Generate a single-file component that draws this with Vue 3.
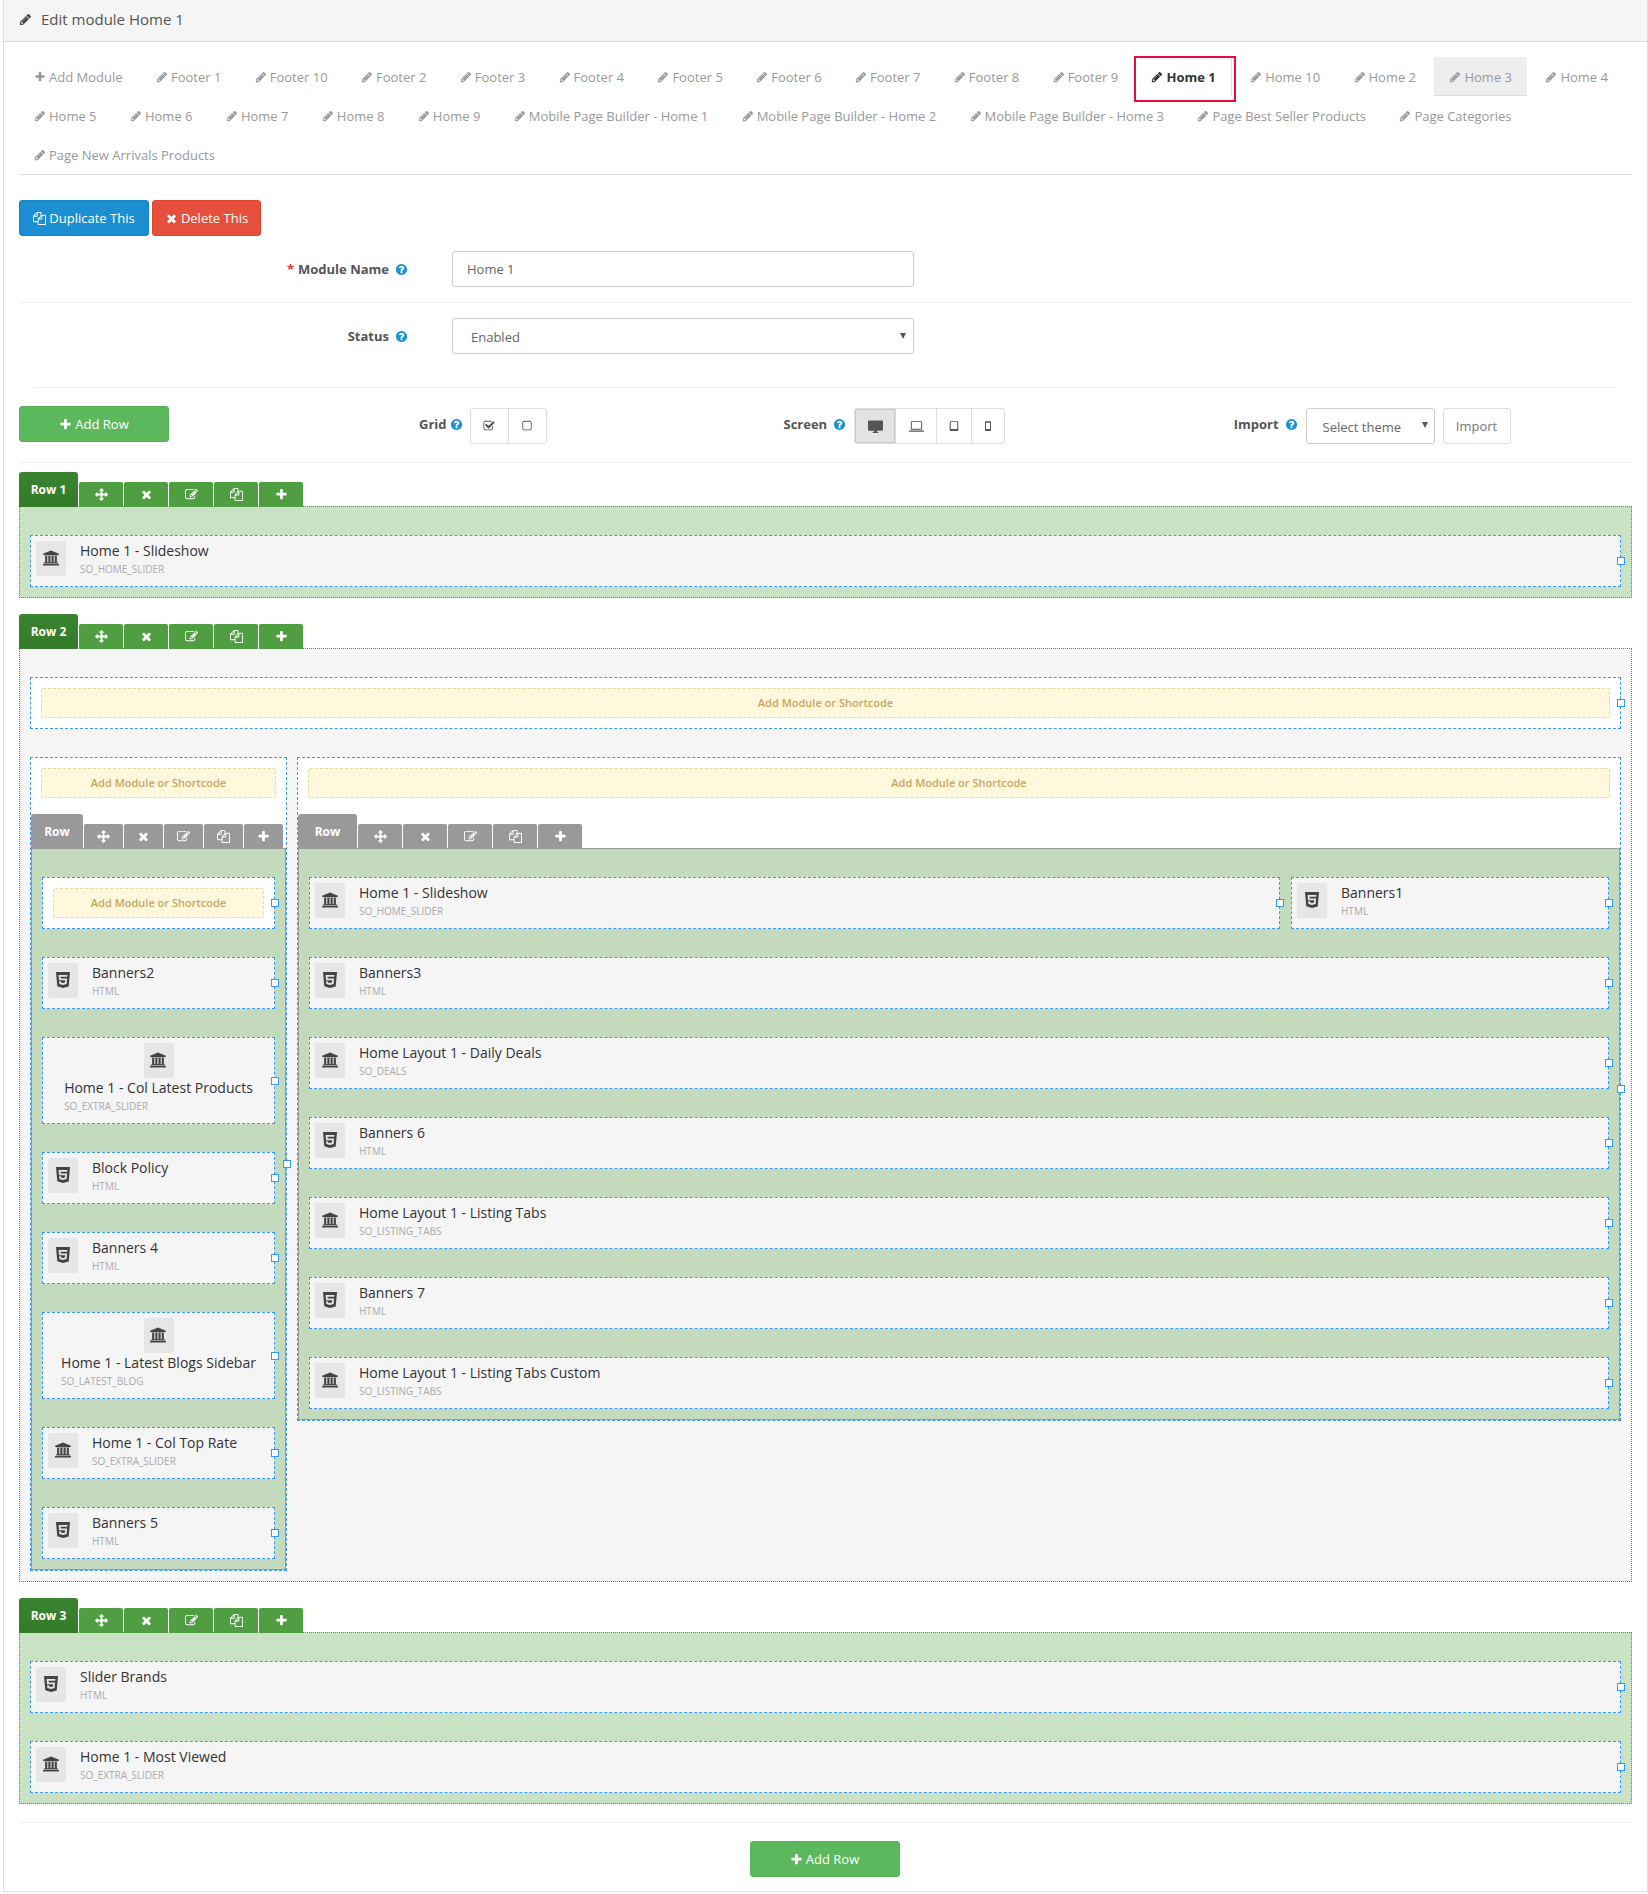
<script setup>
import { h } from 'vue'

const ICONS = {
  pencil: ['0 0 1792 1792', 'M491 1536l91-91-235-235-91 91v107h128v128h107zm523-928q0-22-22-22-10 0-17 7l-542 542q-7 7-7 17 0 22 22 22 10 0 17-7l542-542q7-7 7-17zm-54-192l416 416-832 832h-416v-416zm683 96q0 53-37 90l-166 166-416-416 166-165q36-38 90-38 53 0 91 38l235 234q37 39 37 91z'],
  plus: ['0 0 1792 1792', 'M1600 736v192q0 40-28 68t-68 28h-416v416q0 40-28 68t-68 28h-192q-40 0-68-28t-28-68v-416h-416q-40 0-68-28t-28-68v-192q0-40 28-68t68-28h416v-416q0-40 28-68t68-28h192q40 0 68 28t28 68v416h416q40 0 68 28t28 68z'],
  times: ['0 0 1792 1792', 'M1490 1322q0 40-28 68l-136 136q-28 28-68 28t-68-28l-294-294-294 294q-28 28-68 28t-68-28l-136-136q-28-28-28-68t28-68l294-294-294-294q-28-28-28-68t28-68l136-136q28-28 68-28t68 28l294 294 294-294q28-28 68-28t68 28l136 136q28 28 28 68t-28 68l-294 294 294 294q28 28 28 68z'],
  arrows: ['0 0 1792 1792', 'M1792 896q0 26-19 45l-256 256q-19 19-45 19t-45-19-19-45v-128h-384v384h128q26 0 45 19t19 45-19 45l-256 256q-19 19-45 19t-45-19l-256-256q-19-19-19-45t19-45 45-19h128v-384h-384v128q0 26-19 45t-45 19-45-19l-256-256q-19-19-19-45t19-45l256-256q19-19 45-19t45 19 19 45v128h384v-384h-128q-26 0-45-19t-19-45 19-45l256-256q19-19 45-19t45 19l256 256q19 19 19 45t-19 45-45 19h-128v384h384v-128q0-26 19-45t45-19 45 19l256 256q19 19 19 45z'],
  edit: ['0 0 1792 1792', 'M888 1184l116-116-152-152-116 116v56h96v96h56zm440-720q-16-16-33 1l-350 350q-17 17-1 33t33-1l350-350q17-17 1-33zm80 594v190q0 119-84.5 203.5t-203.5 84.5h-832q-119 0-203.5-84.5t-84.5-203.5v-832q0-119 84.5-203.5t203.5-84.5h832q63 0 117 25 15 7 18 23 3 17-9 29l-49 49q-14 14-32 8-23-6-45-6h-832q-66 0-113 47t-47 113v832q0 66 47 113t113 47h832q66 0 113-47t47-113v-126q0-13 9-22l64-64q15-15 35-7t20 29zm-96-738l288 288-672 672h-288v-288zm444 132l-92 92-288-288 92-92q28-28 68-28t68 28l152 152q28 28 28 68t-28 68z'],
  files: ['0 0 1792 1792', 'M1696 384q40 0 68 28t28 68v1216q0 40-28 68t-68 28h-960q-40 0-68-28t-28-68v-288h-544q-40 0-68-28t-28-68v-672q0-40 20-88t48-76l408-408q28-28 76-48t88-20h416q40 0 68 28t28 68v328q68-40 128-40h416zm-544 213l-299 299h299v-299zm-640-384l-299 299h299v-299zm196 647l316-316v-416h-384v416q0 40-28 68t-68 28h-416v640h512v-256q0-40 20-88t48-76zm956 804v-1152h-384v416q0 40-28 68t-68 28h-416v640h896z'],
  help: ['0 0 1792 1792', 'M1024 1376v-192q0-14-9-23t-23-9h-192q-14 0-23 9t-9 23v192q0 14 9 23t23 9h192q14 0 23-9t9-23zm256-672q0-88-55.5-163t-138.5-116-170-41q-243 0-371 213-15 24 8 42l132 100q7 6 19 6 16 0 25-12 53-68 86-92 34-24 86-24 48 0 85.5 26t37.5 59q0 38-20 61t-68 45q-63 28-115.5 86.5t-52.5 125.5v36q0 14 9 23t23 9h192q14 0 23-9t9-23q0-19 21.5-49.5t54.5-49.5q32-18 49-28.5t46-35 44.5-48 28-60.5 12.5-81zm384 192q0 209-103 385.5t-279.5 279.5-385.5 103-385.5-103-279.5-279.5-103-385.5 103-385.5 279.5-279.5 385.5-103 385.5 103 279.5 279.5 103 385.5z'],
  bank: ['0 0 1920 1792', 'M960 0l960 384v128h-128q0 26-20.5 45t-48.5 19h-1526q-28 0-48.5-19t-20.5-45h-128v-128zm-704 640h256v768h128v-768h256v768h128v-768h256v768h128v-768h256v768h59q28 0 48.5 19t20.5 45v64h-1664v-64q0-26 20.5-45t48.5-19h59v-768zm1595 960q28 0 48.5 19t20.5 45v128h-1920v-128q0-26 20.5-45t48.5-19h1782z'],
  html5: ['0 0 24 24', 'M1.5 0h21l-1.91 21.563L11.977 24l-8.564-2.438L1.5 0zm7.031 9.75l-.232-2.718 10.059.003.23-2.622L5.412 4.41l.698 8.01h9.126l-.326 3.426-2.91.804-2.955-.81-.188-2.11H6.248l.33 4.171L12 19.351l5.379-1.443.744-8.157H8.531z'],
  squareO: ['0 0 1408 1792', 'M1120 256h-832q-66 0-113 47t-47 113v832q0 66 47 113t113 47h832q66 0 113-47t47-113v-832q0-66-47-113t-113-47zm288 160v832q0 119-84.5 203.5t-203.5 84.5h-832q-119 0-203.5-84.5t-84.5-203.5v-832q0-119 84.5-203.5t203.5-84.5h832q119 0 203.5 84.5t84.5 203.5z'],
  checkO: ['0 0 1664 1792', 'M1408 930v318q0 119-84.5 203.5t-203.5 84.5h-832q-119 0-203.5-84.5t-84.5-203.5v-832q0-119 84.5-203.5t203.5-84.5h832q63 0 117 25 15 7 18 23 3 17-9 29l-49 49q-10 10-23 10-3 0-9-2-23-6-45-6h-832q-66 0-113 47t-47 113v832q0 66 47 113t113 47h832q66 0 113-47t47-113v-254q0-13 9-22l64-64q10-10 23-10 6 0 12 3 20 8 20 29zm231-489l-814 814q-24 24-57 24t-57-24l-430-430q-24-24-24-57t24-57l110-110q24-24 57-24t57 24l263 263 647-647q24-24 57-24t57 24l110 110q24 24 24 57t-24 57z'],
  desktop: ['0 0 16 16', 'M1 1.500h14c.5 0 1 .4 1 1v9c0 .5-.5 1-1 1H9.700v1.300h1.300v1H5v-1h1.300v-1.300H1c-.5 0-1-.5-1-1v-9c0-.6.5-1 1-1z'],
  laptop: ['0 0 16 16', 'M3 2h10c.6 0 1 .4 1 1v8.500H2V3c0-.6.4-1 1-1zm0 1v7.500h10V3zM0 12.300h16v1.200H0z'],
  tablet: ['0 0 16 16', 'M3.300 1.500h9.400c.6 0 1 .4 1 1v11c0 .6-.4 1-1 1H3.300c-.6 0-1-.4-1-1v-11c0-.6.4-1 1-1zm.4 1.300v9.200h8.600V2.800z'],
  mobile: ['0 0 16 16', 'M5 1.500h6c.6 0 1 .4 1 1v11c0 .6-.4 1-1 1H5c-.6 0-1-.4-1-1v-11c0-.6.4-1 1-1zm.3 2v8.500h5.400V3.500z'],
}

const Ico = (props) => {
  const [vb, d] = ICONS[props.name]
  return h('svg', { viewBox: vb, fill: 'currentColor', 'aria-hidden': 'true' }, [h('path', { d, 'fill-rule': 'evenodd' })])
}
Ico.props = ['name']

const tabs = [
  'Footer 1', 'Footer 10', 'Footer 2', 'Footer 3', 'Footer 4', 'Footer 5', 'Footer 6', 'Footer 7', 'Footer 8', 'Footer 9',
  'Home 1', 'Home 10', 'Home 2', 'Home 3', 'Home 4', 'Home 5', 'Home 6', 'Home 7', 'Home 8', 'Home 9',
  'Mobile Page Builder - Home 1', 'Mobile Page Builder - Home 2', 'Mobile Page Builder - Home 3',
  'Page Best Seller Products', 'Page Categories', 'Page New Arrivals Products',
]
const rowBtns = ['arrows', 'times', 'edit', 'files', 'plus']

const t = (title, sub, stack = false) => ({ title, sub, icon: sub === 'HTML' ? 'html5' : 'bank', stack })

const row1 = [t('Home 1 - Slideshow', 'SO_HOME_SLIDER')]
const leftTiles = [
  t('Banners2', 'HTML'),
  t('Home 1 - Col Latest Products', 'SO_EXTRA_SLIDER', true),
  t('Block Policy', 'HTML'),
  t('Banners 4', 'HTML'),
  t('Home 1 - Latest Blogs Sidebar', 'SO_LATEST_BLOG', true),
  t('Home 1 - Col Top Rate', 'SO_EXTRA_SLIDER'),
  t('Banners 5', 'HTML'),
]
const rightLines = [
  [t('Home 1 - Slideshow', 'SO_HOME_SLIDER'), t('Banners1', 'HTML')],
  [t('Banners3', 'HTML')],
  [t('Home Layout 1 - Daily Deals', 'SO_DEALS')],
  [t('Banners 6', 'HTML')],
  [t('Home Layout 1 - Listing Tabs', 'SO_LISTING_TABS')],
  [t('Banners 7', 'HTML')],
  [t('Home Layout 1 - Listing Tabs Custom', 'SO_LISTING_TABS')],
]
const row3 = [t('Slider Brands', 'HTML'), t('Home 1 - Most Viewed', 'SO_EXTRA_SLIDER')]
</script>

<template>
  <div class="panel">
    <div class="panel-head"><Ico name="pencil" class="head-ico" /><span>Edit module Home 1</span></div>
    <div class="panel-body">
      <nav class="tabs">
        <a class="tab"><Ico name="plus" class="tab-ico" />Add Module</a>
        <a v-for="n in tabs" :key="n" class="tab" :class="{ active: n === 'Home 1', hover: n === 'Home 3' }"><Ico name="pencil" class="tab-ico" />{{ n }}</a>
      </nav>

      <div class="actions">
        <button class="btn blue"><Ico name="files" class="btn-ico" />Duplicate This</button>
        <button class="btn red"><Ico name="times" class="btn-ico" />Delete This</button>
      </div>

      <div class="form-row first">
        <label class="form-label"><span class="req">*</span> Module Name<Ico name="help" class="help" /></label>
        <input class="field" value="Home 1" />
      </div>
      <div class="form-row second">
        <label class="form-label">Status<Ico name="help" class="help" /></label>
        <div class="select-wrap wide"><select class="field sel"><option>Enabled</option></select></div>
      </div>

      <div class="toolbar">
        <button class="btn green add"><Ico name="plus" class="btn-ico" />Add Row</button>
        <div class="tool grid-tool">
          <b>Grid</b><Ico name="help" class="help tight" />
          <div class="group">
            <span class="cell w38"><Ico name="checkO" class="cell-ico" /></span>
            <span class="cell w37"><Ico name="squareO" class="cell-ico" /></span>
          </div>
        </div>
        <div class="tool screen-tool">
          <b>Screen</b><Ico name="help" class="help" />
          <div class="group">
            <span class="cell on w41"><Ico name="desktop" class="cell-ico dk" /></span>
            <span class="cell w41"><Ico name="laptop" class="cell-ico dk" /></span>
            <span class="cell w35"><Ico name="tablet" class="cell-ico" /></span>
            <span class="cell w32"><Ico name="mobile" class="cell-ico" /></span>
          </div>
        </div>
        <div class="tool import-tool">
          <b>Import</b><Ico name="help" class="help" />
          <div class="select-wrap theme"><select class="field sel theme-sel"><option>Select theme</option></select></div>
          <button class="btn plain">Import</button>
        </div>
      </div>

      <!-- Row 1 -->
      <section class="row">
        <div class="row-head">
          <span class="row-tab">Row 1</span>
          <span v-for="b in rowBtns" :key="b" class="row-btn"><Ico :name="b" class="row-ico" /></span>
        </div>
        <div class="row-body green-body">
          <div v-for="m in row1" :key="m.title" class="tile">
            <span class="tile-icon"><Ico :name="m.icon" /></span>
            <div class="tile-text"><div class="tile-title">{{ m.title }}</div><div class="tile-sub">{{ m.sub }}</div></div>
            <i class="handle"></i>
          </div>
        </div>
      </section>

      <!-- Row 2 -->
      <section class="row">
        <div class="row-head">
          <span class="row-tab">Row 2</span>
          <span v-for="b in rowBtns" :key="b" class="row-btn"><Ico :name="b" class="row-ico" /></span>
        </div>
        <div class="row-body grey-body">
          <div class="col whole">
            <div class="add-box">Add Module or Shortcode</div>
            <i class="handle"></i>
          </div>
          <div class="cols">
            <div class="col left">
              <div class="add-box">Add Module or Shortcode</div>
              <div class="row-head nested narrow">
                <span class="row-tab">Row</span>
                <span v-for="b in rowBtns" :key="b" class="row-btn"><Ico :name="b" class="row-ico" /></span>
              </div>
              <div class="nested-body">
                <div class="tile blank">
                  <div class="add-box">Add Module or Shortcode</div>
                  <i class="handle"></i>
                </div>
                <div v-for="m in leftTiles" :key="m.title" class="tile" :class="{ stack: m.stack }">
                  <span class="tile-icon"><Ico :name="m.icon" /></span>
                  <div class="tile-text"><div class="tile-title">{{ m.title }}</div><div class="tile-sub">{{ m.sub }}</div></div>
                  <i class="handle"></i>
                </div>
              </div>
              <i class="handle"></i>
            </div>
            <div class="col right">
              <div class="add-box">Add Module or Shortcode</div>
              <div class="row-head nested">
                <span class="row-tab">Row</span>
                <span v-for="b in rowBtns" :key="b" class="row-btn"><Ico :name="b" class="row-ico" /></span>
              </div>
              <div class="nested-body">
                <div v-for="(line, i) in rightLines" :key="i" class="tile-line">
                  <div v-for="m in line" :key="m.title" class="tile">
                    <span class="tile-icon"><Ico :name="m.icon" /></span>
                    <div class="tile-text"><div class="tile-title">{{ m.title }}</div><div class="tile-sub">{{ m.sub }}</div></div>
                    <i class="handle"></i>
                  </div>
                </div>
              </div>
              <i class="handle"></i>
            </div>
          </div>
        </div>
      </section>

      <!-- Row 3 -->
      <section class="row">
        <div class="row-head">
          <span class="row-tab">Row 3</span>
          <span v-for="b in rowBtns" :key="b" class="row-btn"><Ico :name="b" class="row-ico" /></span>
        </div>
        <div class="row-body green-body">
          <div v-for="m in row3" :key="m.title" class="tile">
            <span class="tile-icon"><Ico :name="m.icon" /></span>
            <div class="tile-text"><div class="tile-title">{{ m.title }}</div><div class="tile-sub">{{ m.sub }}</div></div>
            <i class="handle"></i>
          </div>
        </div>
      </section>

      <div class="foot">
        <button class="btn green add"><Ico name="plus" class="btn-ico" />Add Row</button>
      </div>
    </div>
  </div>
</template>

<style>
html, body { margin: 0; background: #fff; }
</style>

<style scoped>
* { box-sizing: border-box; }
.panel {
  margin-left: 3px;
  width: 1645px;
  height: 1892px;
  border: 1px solid #ddd;
  border-top: 0;
  font-family: "Open Sans", sans-serif;
  font-size: 13px;
  color: #666;
}
.panel-head {
  height: 42px;
  background: #f5f5f5;
  border-bottom: 1px solid #ddd;
  display: flex;
  align-items: center;
  padding: 0 0 3px 15px;
  font-size: 15px;
  color: #555;
}
.head-ico { width: 13px; height: 13px; margin-right: 9px; color: #444; }
.panel-body { padding: 15px 15px 0; }

/* tabs */
.tabs {
  display: flex;
  flex-wrap: wrap;
  height: 118px;
  border-bottom: 1px solid #ddd;
  align-content: flex-start;
}
.tab {
  display: flex;
  align-items: center;
  height: 39px;
  padding: 1px 15px 0;
  margin-right: 3.400px;
  color: #999;
  font-size: 13px;
  white-space: nowrap;
  position: relative;
  border-radius: 2px 2px 0 0;
}
.tab-ico { width: 12px; height: 12px; margin-right: 3px; flex: none; }
.tab.hover { background: #eee; border-bottom: 1px solid #ddd; }
.tab.active { color: #333; font-weight: 700; border-right: 1px solid #ddd; }
.tab.active::after {
  content: "";
  position: absolute;
  left: -2px; top: -1px; right: -5px; bottom: -6px;
  border: 2px solid #ef0a3e;
}

/* buttons */
.btn {
  height: 36px;
  border: 1px solid transparent;
  border-radius: 3px;
  font: 400 13px "Open Sans", sans-serif;
  display: inline-flex;
  align-items: center;
  justify-content: center;
  padding: 0;
  color: #fff;
}
.btn-ico { width: 13px; height: 13px; margin-right: 3px; }
.actions { display: flex; gap: 3px; margin-top: 25px; }
.blue { background: #1b8fd1; border-color: #1a86c4; width: 130px; }
.red { background: #e64f3c; border-color: #dd4330; width: 109px; }
.green { background: #5cb85c; border-color: #57b357; }
.add { width: 150px; }
.plain { background: #fff; border-color: #ddd; color: #777; width: 68px; margin-left: 8px; }

/* form */
.form-row { display: flex; align-items: center; }
.first { margin-top: 15px; padding-bottom: 15px; border-bottom: 1px solid #eee; }
.second { margin-top: 15px; padding-bottom: 33px; }
.form-label {
  width: 433px;
  padding-right: 44px;
  display: flex;
  justify-content: flex-end;
  align-items: center;
  font-weight: 700;
  font-size: 13px;
  color: #555;
}
.req { color: #e3342f; margin-right: 4px; }
.help { width: 13px; height: 13px; color: #1e91cf; margin-left: 6px; flex: none; }
.help.tight { margin-left: 3px; }
.field {
  width: 100%;
  height: 36px;
  border: 1px solid #ccc;
  border-radius: 3px;
  background: #fff;
  padding: 0 14px;
  font: 400 13px "Open Sans", sans-serif;
  color: #666;
  outline: none;
}
.form-row > .field, .wide { width: 462px; }
.select-wrap { position: relative; }
.select-wrap::after {
  content: "";
  position: absolute;
  right: 8px; top: 15px;
  border-left: 3px solid transparent;
  border-right: 3px solid transparent;
  border-top: 6px solid #555;
}
.sel { appearance: none; padding: 1px 14px 0 18px; }
.theme { width: 129px; margin-left: 8px; }
.theme-sel { padding: 2px 12px 0 16px; color: #666; }
.theme::after { right: 7px; top: 14px; }

.toolbar {
  position: relative;
  display: flex;
  align-items: flex-start;
  height: 76px;
  padding-top: 19px;
  border-bottom: 1px solid #eee;
  margin-bottom: 9px;
}
.toolbar::before {
  content: "";
  position: absolute;
  top: 0; left: 15px; right: 16px;
  border-top: 1px solid #eee;
}
.tool { display: flex; align-items: center; margin-top: 2px; height: 36px; font-size: 13px; color: #555; }
.tool b { position: relative; top: -2px; }
.tool .help { position: relative; top: -2px; }
.grid-tool { margin-left: 250px; }
.grid-tool .group { margin-left: 7px; }
.screen-tool { margin-left: 237px; }
.screen-tool .group { margin-left: 8px; }
.screen-tool .help { margin-left: 6px; }
.import-tool { margin-left: 228.500px; }
.group { display: flex; border: 1px solid #ddd; border-radius: 3px; height: 36px; }
.cell { display: flex; align-items: center; justify-content: center; border-right: 1px solid #ddd; color: #555; }
.cell:last-child { border-right: 0; }
.cell.on { background: #e3e3e3; box-shadow: inset 0 0 0 1px #ccc; }
.w41 { width: 41px; } .w38 { width: 38px; } .w37 { width: 37px; } .w35 { width: 35px; } .w32 { width: 32px; }
.cell-ico { width: 12px; height: 12px; }
.cell-ico.dk { width: 15px; height: 15px; }

/* rows */
.row { margin-top: 16px; }
.toolbar + .row { margin-top: 0; }
.row-head { display: flex; align-items: flex-end; height: 35px; gap: 1px; position: relative; z-index: 1; }
.row-tab {
  width: 59px;
  height: 35px;
  background: linear-gradient(#3a8430, #337a29);
  color: #fff;
  font-weight: 700;
  font-size: 12px;
  text-align: center;
  line-height: 35px;
  border-radius: 3px 3px 0 0;
}
.row-btn {
  width: 44px;
  height: 25px;
  background: #4f9e41;
  color: #fff;
  display: flex;
  align-items: center;
  justify-content: center;
  border-radius: 2px 2px 0 0;
}
.row-ico { width: 13px; height: 13px; }
.row-body {
  margin-top: -1px;
  border: 1px dotted #4c9a3d;
  padding: 28px 10px 10px;
  display: flex;
  flex-direction: column;
  gap: 28px;
}
.green-body { background: #c9e2c4; }
.grey-body { background: #f5f5f5; }

/* tiles */
.tile {
  position: relative;
  flex: 0 0 auto;
  height: 52px;
  display: flex;
  background: #f5f5f5;
  border: 1px dashed #3399ff;
  padding: 5px;
}
.tile-icon {
  flex: none;
  width: 30px;
  height: 35px;
  padding: 0 1px 1px 0;
  border-radius: 2px;
  background: #e6e6e6;
  color: #444;
  display: flex;
  align-items: center;
  justify-content: center;
}
.tile-icon svg { width: 16px; height: 16px; }
.tile-text { margin-left: 14px; }
.tile-title { font-size: 14px; line-height: 20px; color: #333; white-space: nowrap; }
.tile-sub { font-size: 10px; line-height: 14px; margin-top: 1px; color: #aaa; white-space: nowrap; }
.tile.stack { height: 87px; flex-direction: column; align-items: center; }
.tile.stack .tile-text { margin-left: 0; margin-top: 0; }
.tile.blank { background: #fff; padding: 10px; display: block; }

.handle {
  position: absolute;
  right: -5px;
  top: 50%;
  width: 8px;
  height: 8px;
  margin-top: -4px;
  background: #fff;
  border: 1px solid #3399ff;
  z-index: 2;
}

/* columns */
.col { position: relative; background: #fff; border: 1px dashed #3399ff; padding: 10px; }
.whole { height: 52px; }
.cols { display: flex; align-items: flex-start; gap: 10px; }
.left { width: 257px; flex: none; padding-bottom: 0; }
.right { flex: 1; padding-bottom: 0; }
.add-box {
  height: 30px;
  background: #fff8dc;
  border: 1px dashed #e8d9a0;
  border-radius: 2px;
  color: #c8a660;
  font-weight: 600;
  font-size: 11px;
  line-height: 28px;
  text-align: center;
}
.nested { margin: 16px -10px 0; }
.nested .row-tab { background: #999; }
.nested .row-btn { background: #999; }
.narrow .row-tab { width: 52px; }
.narrow .row-btn { width: 39px; }
.nested-body {
  margin: -1px -10px 0;
  background: #c3dabc;
  border: 1px solid #999;
  padding: 28px 10px 10px;
  display: flex;
  flex-direction: column;
  gap: 28px;
}
.tile-line { display: flex; gap: 11px; }
.tile-line > .tile { flex: 1; }
.tile-line > .tile:nth-child(2) { flex: 0 0 318px; }

.foot {
  margin-top: 18px;
  padding: 18px 2px 0 0;
  border-top: 1px solid #eee;
  display: flex;
  justify-content: center;
}
</style>
